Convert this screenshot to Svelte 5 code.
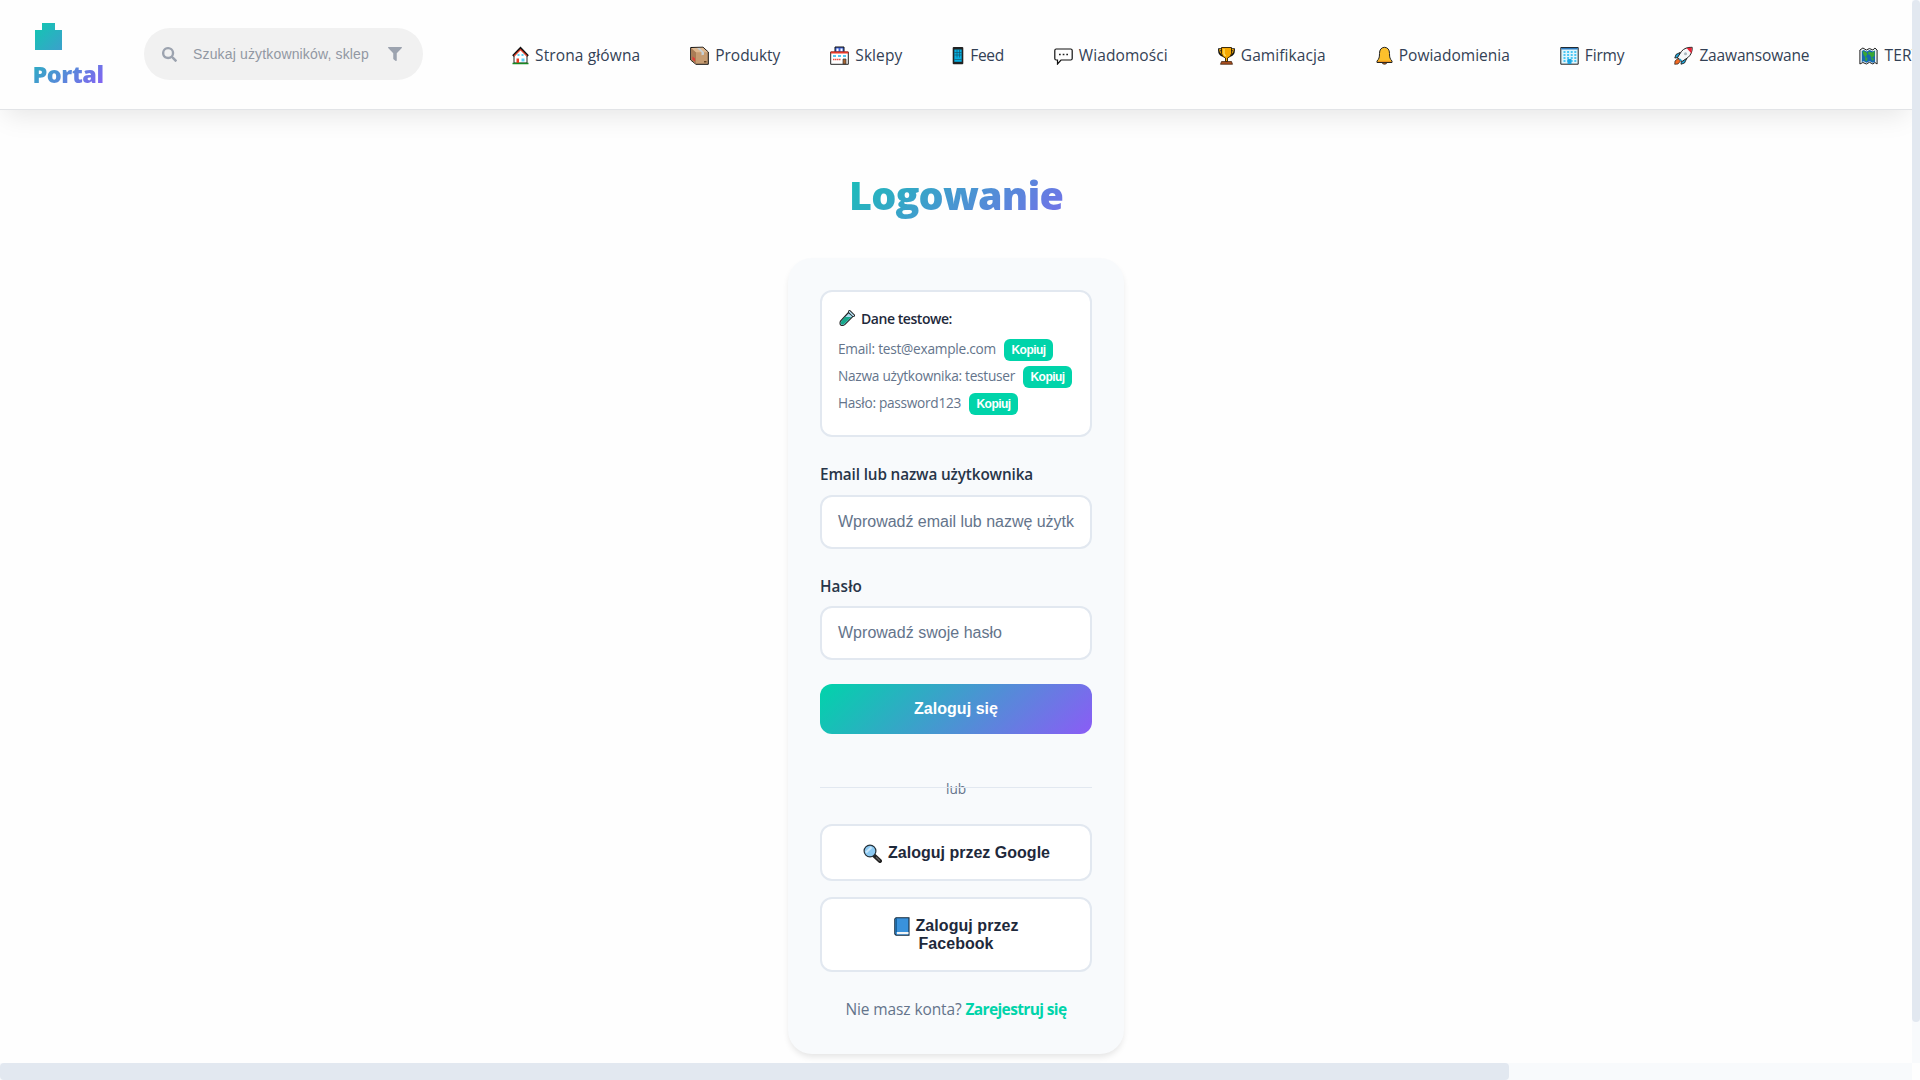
<script>
  const nav = [
    { icon: 'home', iw: 17, label: 'Strona główna', w: 105.3 },
    { icon: 'box', iw: 19, label: 'Produkty', w: 65 },
    { icon: 'shop', iw: 19, label: 'Sklepy', w: 47 },
    { icon: 'phone', iw: 12, label: 'Feed', w: 33.5 },
    { icon: 'chat', iw: 19, label: 'Wiadomości', w: 89 },
    { icon: 'cup', iw: 17, label: 'Gamifikacja', w: 85 },
    { icon: 'bell', iw: 17, label: 'Powiadomienia', w: 111 },
    { icon: 'office', iw: 19, label: 'Firmy', w: 39.6 },
    { icon: 'rocket', iw: 19, label: 'Zaawansowane', w: 110 },
    { icon: 'map', iw: 19, label: 'TERYT', w: 45 }
  ];
  const creds = [
    { text: 'Email: test@example.com', w: 158 },
    { text: 'Nazwa użytkownika: testuser', w: 177 },
    { text: 'Hasło: password123', w: 123 }
  ];

  // Adjusts tracking so that a line of text takes the given width.
  function fit(node, width) {
    const natural = node.getBoundingClientRect().width;
    node.style.letterSpacing = (width - natural) / node.textContent.length + 'px';
  }
</script>

{#snippet glyph(name, w)}
  <svg class="glyph" width={w} height="19" viewBox="0 0 {w} 19" aria-hidden="true">
    {#if name === 'home'}
      <path d="M2 9.5 8.5 3 15 9.5V17H2z" fill="#fff" stroke="#222" stroke-width="1" />
      <path d="M1 10 8.5 2.2 16 10" fill="none" stroke="#111" stroke-width="2.4" />
      <path d="M2 10 8.5 3.6 15 10" fill="none" stroke="#e8432d" stroke-width="1.1" />
      <path d="M5.5 8h2v2h-2zM9.500 8h2v2h-2zM9.500 12.500h3v3h-3z" fill="#5fd0f5" />
      <path d="M4.500 12.500h2.500V17H4.500z" fill="#f03a24" />
      <path d="M.5 17.500h16" stroke="#168a22" stroke-width="1.500" />
    {:else if name === 'box'}
      <path d="M.7 1.500 13 1.200 18.300 6v12.300H6L.7 14z" fill="#c69c72" stroke="#111" />
      <path d="M1.200 2 6 6.300V18L1.200 14z" fill="#a97c55" />
      <path d="M1.200 2 13 1.700 18 6.300H6z" fill="#dfb991" />
      <path d="m7 2 4.500 4.300v3l2.500-.5V6.300L9.500 2z" fill="#c8d0d5" />
      <path d="m2.500 10.500 2.500 2v3l-2.500-2z" fill="#e53935" /><path d="M14 15h2.500v1.500H14z" fill="#654321" />
    {:else if name === 'shop'}
      <path d="M5 1h9v6H5z" fill="#4165d8" stroke="#111" /><path d="M6.500 2.500h2v3h-2zM10.500 2.500h2v3h-2z" fill="#fff" />
      <path d="M.7 6h17.600v12.300H.7z" fill="#fff" stroke="#222" />
      <path d="M.7 6.500h17.600" stroke="#e73928" stroke-width="2" />
      <path d="M3 9h3v2H3zM8 9h3v2H8zM13 9h3v2h-3z" fill="#55c9f2" />
      <path d="M3 13.500h8" stroke="#ee5045" stroke-width="1.500" stroke-dasharray="1.500 .5" />
      <path d="M13 13h3v5h-3z" fill="#a86432" stroke="#333" stroke-width=".7" />
    {:else if name === 'phone'}
      <rect x=".7" y="1" width="10.600" height="17.300" rx="1" fill="#222" />
      <path d="M2.300 3.500h7.400v12.300H2.300z" fill="#06aee0" />
      <path d="M5 3.500v8M7.500 3.500v8M2.300 6.500h7.400M2.300 9h7.400M2.300 13.500h7.400" stroke="#14566b" stroke-width=".7" />
    {:else if name === 'chat'}
      <path d="M2.200 3h14.500q1.500 0 1.500 1.500v8q0 1.500-1.500 1.500H7l-3.500 4V14H2.200Q.8 14 .8 12.500v-8Q.8 3 2.200 3z" fill="#fff" stroke="#111" stroke-width="1.200" />
      <path d="M5 8.500h1.700M8.700 8.500h1.700M12.300 8.500H14" stroke="#222" stroke-width="1.500" />
    {:else if name === 'cup'}
      <path d="M4 3.500H1.300q-.3 5 4 6M13 3.500h2.700q.3 5-4 6" fill="none" stroke="#111" stroke-width="2.400" />
      <path d="M4 3.500H1.500q0 4 4 6M13 3.500h2.500q0 4-4 6" fill="none" stroke="#f4a900" stroke-width="1" />
      <path d="M3.500 1.500h10v6q-.5 3.500-4 4.500v3.500h-2V12q-3.500-1-4-4.500z" fill="#f6a800" stroke="#2a1a00" stroke-width=".9" />
      <path d="M6 3v5l1.500 2" fill="none" stroke="#ffe06a" stroke-width="1.300" />
      <path d="M3.500 15.500h10l1 2.800h-12z" fill="#a64d1f" stroke="#3a1c0a" stroke-width=".7" />
    {:else if name === 'bell'}
      <path d="M8.500 1.300q5 .4 5 6.200c0 4 .5 5.500 2.500 7.500v1.500H1V15c2-2 2.500-3.500 2.500-7.500q0-5.800 5-6.200z" fill="#fcc02c" stroke="#222" />
      <path d="M6 16.500h5q-.4 1.800-2.500 1.800T6 16.500z" fill="#a85a1d" stroke="#222" stroke-width=".7" />
      <path d="M2 15.300h13" stroke="#e58a1d" />
    {:else if name === 'office'}
      <path d="M.8 1.500h17.400v16.700H.8z" fill="#dff5fd" stroke="#222" />
      <path d="M1.200 2.700h16.600" stroke="#2c7bc0" stroke-width="1.600" />
      <path d="M3.500 6h13M3.500 9h13M3.500 12h13M3.500 15h13" stroke="#4cc7f4" stroke-width="1.900" stroke-dasharray="2 1.600" />
      <path d="M7.500 13h4v5h-4z" fill="#1da5e2" />
    {:else if name === 'rocket'}
      <path d="m6 6.500-4 2L.8 12l4-.5zM12.500 13l-2 4L7 18.200l.5-4z" fill="#20a8dd" stroke="#222" stroke-width=".9" />
      <path d="M4 12.500 1 15l-.3 3.300L4 18l2.500-3z" fill="#f36a23" stroke="#222" stroke-width=".7" />
      <path d="M18.200 1.300q-7-.3-10.700 4L3.500 11.500l4.500 4 6-4q4.500-4 4.200-10.200z" fill="#f4f7f8" stroke="#222" />
      <path d="m12.500 1.900 5.300-.2-.3 5.800z" fill="#ed2235" /><circle cx="11.500" cy="7.700" r="1.500" fill="#a9b7bd" />
      <path d="m5.500 13 2 1.800" stroke="#18a6dd" stroke-width="1.500" />
    {:else if name === 'map'}
      <path d="m.9 4 3-2 3.500 2 3-1.500 3.500 1.500 2-2 2.200 2v14l-2.200-1.500-2 1.500-3.500-1.700L7.400 18l-3.500-1.500-3 1.500z" fill="#e8f0f2" stroke="#222" />
      <path d="m2.800 5 2-1 3 1.500 2.700-1.500 3.500 1.500 2-1v11.500l-2 .7-3.500-1.500-3 1.500-2.700-1.500-2 .8z" fill="#1769b0" />
      <path d="m3.500 5 3.500 1 1.500 2-2 3.500-2-3zM9.500 5.500l3.500 1 2.500-1.500v5l-3 2-1.500-3L9 8zM6 11.500h2.500L8 15H6.500zM11.500 12l3.500.5-1 2.500z" fill="#39a832" />
    {:else if name === 'tube'}
      <path d="m10.500 2.500 4 4" stroke="#111" stroke-width="3" stroke-linecap="round" />
      <path d="M9.500 3.500 1.500 12Q.3 15 2 16.200q2 1 4-.8l8-8z" fill="#a8dcef" stroke="#222" stroke-width="1.100" />
      <path d="m10.500 2.700 3.800 3.800" stroke="#b9e4f5" stroke-width="1.600" stroke-linecap="round" />
      <path d="M6 8h6.400l-7 6.800q-1.800 1.500-3 .7-1.200-1.200-.2-3z" fill="#17a88b" />
    {:else if name === 'lens'}
      <path d="m10.500 11 6.500 6" stroke="#222" stroke-width="4" stroke-linecap="round" />
      <path d="m13 13 3.800 3.700" stroke="#666" stroke-width="1.200" />
      <circle cx="7" cy="7" r="5.900" fill="#8cc9f2" stroke="#26323a" stroke-width="1.200" />
      <path d="m3 8.500 5.500-5.300" stroke="#c8e7fb" stroke-width="2.200" />
    {:else if name === 'book'}
      <path d="M2 .7h13v17.500H2L.8 17V2z" fill="#3992dc" stroke="#172b3c" stroke-width="1.100" />
      <path d="M2.400 1v14" stroke="#17629e" stroke-width="1.200" /><path d="M3 15h11.500v2.200H3z" fill="#f2f5f6" />
    {/if}
  </svg>
{/snippet}

<div class="page">
  <div class="middle">
    <div class="view">
      <header>
        <div class="logo">
          <div class="bag"></div>
          <span class="brand"><span use:fit={71}>Portal</span></span>
        </div>
        <div class="search">
          <svg width="15" height="15" viewBox="0 0 512 512"><path fill="#9ca3af" d="M505 443 405 343c-4-4-11-7-17-7h-16a208 208 0 1 0-36 36v16c0 6 3 13 7 17l100 100c9 9 24 9 33 0l29-29c9-9 9-24 0-33zM208 336a128 128 0 1 1 0-256 128 128 0 0 1 0 256z" /></svg>
          <div class="query"><span use:fit={176}>Szukaj użytkowników, sklep</span></div>
          <svg width="14" height="14" viewBox="0 0 512 512"><path fill="#9ca3af" d="M488 0H24C3 0-8 26 7 41l185 185v206c0 8 4 15 10 20l80 56c16 11 38 0 38-20V226L505 41c15-15 4-41-17-41z" /></svg>
        </div>
        <nav>
          {#each nav as n}
            <a class="item">{@render glyph(n.icon, n.iw)}<span use:fit={n.w}>{n.label}</span></a>
          {/each}
        </nav>
      </header>

      <main>
        <h1><span use:fit={214}>Logowanie</span></h1>
        <section class="card">
          <div class="test">
            <div class="test-title">{@render glyph('tube', 17)}<span use:fit={91}>Dane testowe:</span></div>
            {#each creds as c}
              <div class="cred"><span use:fit={c.w}>{c.text}</span><button class="copy"><span use:fit={34}>Kopiuj</span></button></div>
            {/each}
          </div>
          <div class="label"><span use:fit={213}>Email lub nazwa użytkownika</span></div>
          <div class="field"><span use:fit={236}>Wprowadź email lub nazwę użytk</span></div>
          <div class="label second"><span use:fit={42}>Hasło</span></div>
          <div class="field"><span use:fit={164}>Wprowadź swoje hasło</span></div>
          <button class="submit"><span use:fit={84}>Zaloguj się</span></button>
          <div class="or"><span use:fit={20}>lub</span></div>
          <button class="social google">{@render glyph('lens', 19)}<span use:fit={162}>Zaloguj przez Google</span></button>
          <button class="social facebook">
            <div class="row">{@render glyph('book', 16)}<span use:fit={103}>Zaloguj przez</span></div>
            <div class="row"><span use:fit={75}>Facebook</span></div>
          </button>
          <p class="signup"><span use:fit={116}>Nie masz konta?</span><b use:fit={101}>Zarejestruj się</b></p>
        </section>
      </main>
    </div>
    <div class="vbar"><div class="vthumb"></div></div>
  </div>
  <div class="hbar"><div class="hthumb"></div></div>
</div>

<style>
  :global(body) { margin: 0; overflow: hidden; }
  * { box-sizing: border-box; }
  .page { width: 1920px; height: 1080px; display: flex; flex-direction: column; background: #fefefe; font-family: 'Open Sans', 'Noto Sans', sans-serif; color: #1e293b; overflow: hidden; }
  .middle { display: flex; height: 1063px; }
  .view { width: 1912px; height: 1063px; overflow: hidden; }
  span, b { white-space: nowrap; }
  span { display: inline-block; }
  .glyph { flex: none; display: block; }

  header { height: 110px; display: flex; align-items: flex-start; border-bottom: 1px solid #e2e4e7; box-shadow: 0 10px 25px -5px rgba(0, 0, 0, 0.1); overflow: visible; }
  .logo { width: 72px; height: 72px; margin: 19px 0 0 32px; display: flex; flex-direction: column; flex: none; background: linear-gradient(135deg, #00d4aa, #8b5cf6); background-clip: text; -webkit-background-clip: text; color: transparent; }
  .bag { width: 27px; height: 27px; margin: 4px 0 0 3px; background: linear-gradient(135deg, #10c8b0, #3ca0cc); clip-path: polygon(7px 0, 20px 0, 20px 7px, 27px 7px, 27px 27px, 0 27px, 0 7px, 7px 7px); }
  .brand { height: 34px; line-height: 34px; margin-top: 7px; padding-left: 0.5px; font-size: 23.5px; font-weight: 800; }
  .search { width: 279px; height: 52px; margin: 28px 0 0 40px; padding: 0 22px 0 18px; display: flex; align-items: center; flex: none; border-radius: 26px; background: #f1f1f1; }
  .query { flex: 1; margin: 0 19px 0 16px; line-height: 20px; font-family: 'Liberation Sans', Arial, sans-serif; font-size: 14px; color: #9298a3; }
  .search svg { flex: none; }
  nav { display: flex; gap: 50px; height: 110px; align-items: center; margin-left: 89px; }
  .item { display: flex; align-items: center; gap: 6px; flex: none; font-size: 15.5px; font-weight: 500; line-height: 22px; color: #334155; }

  main { display: flex; flex-direction: column; align-items: center; }
  h1 { width: 336px; height: 60px; margin: 55px 0 33px; text-align: center; line-height: 60px; font-size: 39.5px; font-weight: 800; background: linear-gradient(135deg, #00d4aa, #8b5cf6); background-clip: text; -webkit-background-clip: text; color: transparent; }
  .card { width: 336px; height: 796px; padding: 32px; display: flex; flex-direction: column; border-radius: 24px; background: #f8fafc; box-shadow: 0 4px 6px -1px rgba(0, 0, 0, 0.1); }
  .test { height: 147px; flex: none; padding: 18px 16px 0; border: 2px solid #e2e8f0; border-radius: 12px; background: #fff; }
  .test-title { display: flex; align-items: center; gap: 5px; height: 20px; margin: -2px 0 11px; padding-left: 1px; font-size: 14px; font-weight: 600; }
  .cred { display: flex; align-items: center; height: 22px; margin-bottom: 5px; font-size: 13.7px; line-height: 22px; color: #64748b; }
  .cred > span { height: 24px; }
  .copy { width: 49px; height: 22px; margin-left: 8px; padding: 0; border: 0; border-radius: 6px; background: #00d4aa; color: #fff; font: bold 12px 'Liberation Sans', Arial, sans-serif; }
  .label { height: 24px; line-height: 24px; margin: 25px 0 9px; font-size: 15.3px; font-weight: 600; flex: none; color: #283548; }
  .second { margin: 25px 0 8px; }
  .field { height: 54px; flex: none; display: flex; align-items: center; padding: 0 16px; border: 2px solid #e2e8f0; border-radius: 12px; background: #fff; font: 16px/22px 'Liberation Sans', Arial, sans-serif; color: #64748b; }
  .submit { height: 50px; flex: none; margin-top: 24px; border: 0; border-radius: 12px; background: linear-gradient(135deg, #00d4aa, #8b5cf6); color: #fff; font: bold 16px 'Liberation Sans', Arial, sans-serif; }
  .or { position: relative; height: 22px; flex: none; margin: 43px 0 25px; text-align: center; line-height: 23px; font-size: 13.7px; color: #64748b; }
  .or::after { content: ''; position: absolute; left: 0; right: 0; top: 10px; height: 1px; background: #e2e8f0; }
  .social { flex: none; padding: 0; border: 2px solid #e2e8f0; border-radius: 12px; background: #fff; color: #1e293b; font: bold 16px/18px 'Liberation Sans', Arial, sans-serif; }
  .google { height: 57px; padding: 1px 0 0 1px; display: flex; align-items: center; justify-content: center; gap: 6px; }
  .facebook { height: 75px; margin-top: 16px; padding: 1px 0 0; }
  .row { display: flex; justify-content: center; align-items: center; gap: 6px; height: 18px; }
  .signup { display: flex; justify-content: center; gap: 4px; margin: 25px 0 0; line-height: 24px; font-size: 15.5px; color: #64748b; }
  .signup b { color: #00d4aa; font-weight: 700; }

  .vbar { width: 8px; background: #f8fafc; }
  .vthumb { height: 1022px; border-radius: 4px; background: #e2e8f0; }
  .hbar { width: 1912px; height: 17px; background: #f8fafc; }
  .hthumb { width: 1509px; height: 17px; border-radius: 4px; background: #e2e8f0; }
</style>
